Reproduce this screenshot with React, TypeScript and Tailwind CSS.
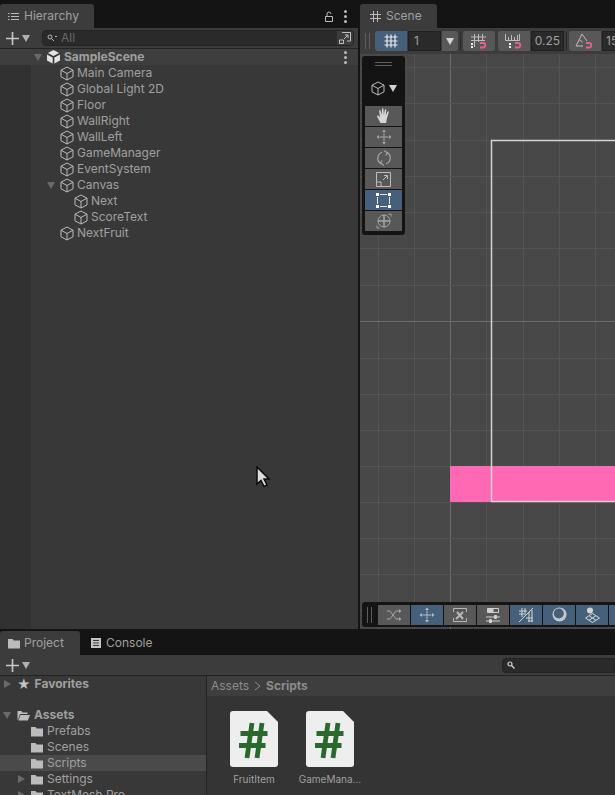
import React from "react";

const Cube = ({ className = "" }: { className?: string }) => (
  <svg width="14" height="15" viewBox="0 0 14 15" fill="none" stroke="#bcbcbc" strokeWidth="1" className={className}>
    <path d="M7 1 13 4.200V10.800L7 14 1 10.800V4.200Z" />
    <path d="M1 4.200 7 7.500 13 4.200M7 7.500V14" />
  </svg>
);

const Down = ({ color = "#6a6a6a", w = 8, h = 7 }: { color?: string; w?: number; h?: number }) => (
  <svg width={w} height={h} viewBox="0 0 8 7">
    <path d="M0 0H8L4 7Z" fill={color} />
  </svg>
);

const Right = () => (
  <svg width="7" height="8" viewBox="0 0 7 8">
    <path d="M0 0V8L7 4Z" fill="#6a6a6a" />
  </svg>
);

const Plus = () => (
  <svg width="13" height="13" viewBox="0 0 13 13">
    <path d="M5.700 0h1.600v13H5.700zM0 5.700h13v1.600H0z" fill="#c8c8c8" />
  </svg>
);

const Dots = () => (
  <div className="flex flex-col gap-[2px]">
    <span className="size-[3px] rounded-full bg-[#bcbcbc]" />
    <span className="size-[3px] rounded-full bg-[#bcbcbc]" />
    <span className="size-[3px] rounded-full bg-[#bcbcbc]" />
  </div>
);

const FolderIcon = ({ open }: { open?: boolean }) => (
  <svg width="13" height="11" viewBox="0 0 13 11">
    {open ? (
      <path d="M.5 1h4l1 1.500h5V4H3L.9 10H.5zM3.500 5H13l-2.200 5.500H1.400z" fill="#bcbcbc" />
    ) : (
      <path d="M0 1h4.500l1.200 1.500H12V10.500H0z" fill="#bcbcbc" />
    )}
  </svg>
);

const ScriptFile = () => (
  <svg width="48" height="57" viewBox="0 0 48 57">
    <path d="M3 0H37L48 11V53a3 3 0 0 1-3 3H3a3 3 0 0 1-3-3V3a3 3 0 0 1 3-3Z" fill="#eeeeee" />
    <g stroke="#2a682c" strokeWidth="4.800" fill="none">
      <path d="M22 12 17 47M32 12 27 47" />
      <path d="M10.500 22.500H37.500M9 34.500H35.500" />
    </g>
  </svg>
);

const MagnetTail = () => (
  <path d="M11 14.500h3a2.200 2.200 0 0 0 0-4.500H11" fill="none" stroke="#e8608f" strokeWidth="1.800" />
);

const GridIcon = () => (
  <svg width="14" height="14" viewBox="0 0 14 14" stroke="#eaeaea" strokeWidth="1.200" fill="none">
    <path d="M3 .5V13.500M7 .5V13.500M11 .5V13.500M.5 3H13.500M.5 7H13.500M.5 11H13.500" />
  </svg>
);

const SnapGrid = () => (
  <svg width="20" height="16" viewBox="0 0 20 16" stroke="#bdbdbd" fill="none">
    <path d="M5.500 1V14M9.500 1V9M13.500 1V8M2 4H17M2 7.500H16" />
    <path d="M2 11H4M2 14H4" stroke="#f0f0f0" strokeWidth="2" />
    <MagnetTail />
  </svg>
);

const SnapRule = () => (
  <svg width="20" height="16" viewBox="0 0 20 16" stroke="#bdbdbd" fill="none">
    <path d="M1.500 1V7.500H15.500V1M4.500 4V7M7.500 2V7M10.500 4V7M13.500 2V7" />
    <path d="M5 11H7M5 14H7" stroke="#f0f0f0" strokeWidth="2" />
    <MagnetTail />
  </svg>
);

const SnapAngle = () => (
  <svg width="20" height="16" viewBox="0 0 20 16" stroke="#bdbdbd" fill="none">
    <path d="M7 1 1 13H8M7 1 12 8M4.500 7 7.500 9" />
    <MagnetTail />
  </svg>
);

const Hand = () => (
  <svg width="16" height="16" viewBox="0 0 16 16" fill="#d6d6d6">
    <path d="M4.500 15 1.200 8.800c-.6-1.200.8-1.800 1.500-.8L4 9.500 3.200 3c-.1-1.200 1.300-1.300 1.500-.2L5.800 7l.2-5.700c0-1.300 1.500-1.300 1.500 0L7.800 7l1-5c.3-1.200 1.700-1 1.500.2L9.700 7.500l1.700-3.800c.5-1 1.800-.5 1.400.6L11 10l-.9 5Z" />
  </svg>
);

const MoveIcon = ({ c = "#a6a6a6" }: { c?: string }) => (
  <svg width="16" height="16" viewBox="0 0 16 16" fill={c} stroke={c}>
    <path d="M3.500 8H12.500M8 3.500V12.500" strokeWidth="1" />
    <path d="M8 .5 10 3H6ZM8 15.500 6 13H10ZM.5 8 3 6V10ZM15.500 8 13 10V6Z" stroke="none" />
  </svg>
);

const RotateIcon = () => (
  <svg width="16" height="16" viewBox="0 0 16 16" fill="none" stroke="#a6a6a6" strokeWidth="1.200">
    <path d="M6 2.200A6.300 6.300 0 0 0 4.500 13.300M10 13.800A6.300 6.300 0 0 0 11.500 2.700" />
    <path d="M8 .8 11.500 2.700 9.800 5.500M8 15.200 4.500 13.300 6.200 10.500" />
  </svg>
);

const ScaleIcon = () => (
  <svg width="15" height="15" viewBox="0 0 15 15" fill="none" stroke="#bdbdbd">
    <path d="M.5 10V.5H14.500V14.500H5M5 10H.5V14.500H5ZM7 8 11 4M8 3.500H11.500V7" />
  </svg>
);

const RectIcon = () => (
  <svg width="15" height="15" viewBox="0 0 15 15" fill="#ffffff" stroke="#e6e6e6">
    <path d="M1.500 4V11M13.500 4V11M4 1.500H11M4 13.500H11" fill="none" />
    <path d="M0 0h3v3H0zM12 0h3v3h-3zM0 12h3v3H0zM12 12h3v3h-3z" stroke="none" />
  </svg>
);

const TransformIcon = () => (
  <svg width="16" height="16" viewBox="0 0 16 16" fill="none" stroke="#a6a6a6">
    <circle cx="8" cy="8" r="6" />
    <path d="M8 2V14M2 8H14" strokeWidth="1.500" />
    <path d="M1 15V12.500M1 15H3.500M15 1V3.500M15 1H12.500" />
  </svg>
);

const tools = [
  { icon: <Hand />, active: false },
  { icon: <MoveIcon />, active: false },
  { icon: <RotateIcon />, active: false },
  { icon: <ScaleIcon />, active: false },
  { icon: <RectIcon />, active: true },
  { icon: <TransformIcon />, active: false },
];

const overlayButtons = [
  {
    active: false,
    icon: (
      <svg width="16" height="14" viewBox="0 0 16 14" fill="none" stroke="#a6a6a6">
        <path d="M1 3H4L10 11H13M1 11H4L10 3H13" />
        <path d="M13 1 15.500 3 13 5ZM13 9 15.500 11 13 13Z" fill="#a6a6a6" stroke="none" />
      </svg>
    ),
  },
  { active: true, icon: <MoveIcon c="#b4bcc4" /> },
  {
    active: false,
    icon: (
      <svg width="16" height="16" viewBox="0 0 16 16" fill="none" stroke="#b8b8b8">
        <path d="M1.500 5V1.500H14.500V5M1.500 11V14.500H14.500V11" />
        <path d="M4 12 11 5M5 5 11 12" strokeWidth="2" />
      </svg>
    ),
  },
  {
    active: false,
    icon: (
      <svg width="14" height="16" viewBox="0 0 14 16" fill="none" stroke="#d0d0d0">
        <path d="M1.500 1.500H12.500V5.500H1.500Z" />
        <path d="M2 1.500H7V5.500H2Z" fill="#d0d0d0" />
        <path d="M0 10H14M0 14H14" />
        <path d="M8.500 8.500H10.500V11.500H8.500ZM3.500 12.500H5.500V15.500H3.500Z" fill="#d0d0d0" />
      </svg>
    ),
  },
  {
    active: true,
    icon: (
      <svg width="16" height="16" viewBox="0 0 16 16" fill="none" stroke="#d4d4d4">
        <path d="M4 1V10M7 1V8M11 5V15M14 3V15M1 4H9M1 7H6M8 11H15M10 14H15M15 1 1 15" />
      </svg>
    ),
  },
  {
    active: true,
    icon: (
      <svg width="15" height="15" viewBox="0 0 15 15">
        <circle cx="7.500" cy="7.500" r="7" fill="#c8c8c8" />
        <circle cx="6.800" cy="6.500" r="5" fill="#46607c" />
      </svg>
    ),
  },
  {
    active: true,
    icon: (
      <svg width="15" height="16" viewBox="0 0 15 16" fill="none" stroke="#d4d4d4">
        <circle cx="5" cy="3.500" r="3" fill="#d4d4d4" stroke="none" />
        <path d="M7.500 6.500 14.500 11 7.500 15.500 .5 11Z M4 8.700 11 13.300M11 8.700 4 13.300" />
      </svg>
    ),
  },
];

const items = [
  { name: "Main Camera", pad: "pl-[29px]" },
  { name: "Global Light 2D", pad: "pl-[29px]" },
  { name: "Floor", pad: "pl-[29px]" },
  { name: "WallRight", pad: "pl-[29px]" },
  { name: "WallLeft", pad: "pl-[29px]" },
  { name: "GameManager", pad: "pl-[29px]" },
  { name: "EventSystem", pad: "pl-[29px]" },
  { name: "Canvas", pad: "pl-[29px]", open: true },
  { name: "Next", pad: "pl-[43px]" },
  { name: "ScoreText", pad: "pl-[43px]" },
  { name: "NextFruit", pad: "pl-[29px]" },
];

const SceneCanvas = () => {
  const xs = [378, 414, 450, 486, 523, 559, 595];
  const ys = [67, 103, 140, 176, 212, 248, 285, 321, 358, 394, 430, 466, 502, 538, 574, 610];
  return (
    <svg width="255" height="575" viewBox="360 54 255 575" className="absolute inset-0">
      {xs.map((x) => (
        <line key={x} x1={x + 0.5} x2={x + 0.5} y1="54" y2="629" stroke={x === 450 ? "#6c6c6c" : "#535353"} />
      ))}
      {ys.map((y) => (
        <line key={y} y1={y + 0.5} y2={y + 0.5} x1="360" x2="615" stroke={y === 321 ? "#6c6c6c" : "#535353"} />
      ))}
      <rect x="450" y="466" width="165" height="36" fill="#ff69b4" />
      <path d="M615 140.500H491.500V501.500H615" fill="none" stroke="#d4d4d4" strokeWidth="1.500" />
    </svg>
  );
};

export default function App() {
  return (
    <div className="flex h-[795px] w-[615px] flex-col overflow-hidden bg-[#141414] font-['Inter',sans-serif] text-[12px] text-[#a0a0a0]">
      <div className="flex h-[629px] shrink-0 gap-[2px]">
        {/* Hierarchy */}
        <section className="flex w-[358px] shrink-0 flex-col">
          <div className="flex h-[28px] shrink-0 items-end justify-between pr-[11px]">
            <div className="flex h-[24px] w-[94px] items-center gap-[5px] rounded-t-[3px] bg-[#3c3c3c] pl-[8px]">
              <svg width="11" height="9" viewBox="0 0 11 9" stroke="#bcbcbc">
                <path d="M3 1.500H11M3 4.500H11M3 7.500H11M0 1.500H1.500M0 4.500H1.500M0 7.500H1.500" />
              </svg>
              <span>Hierarchy</span>
            </div>
            <div className="mb-[5px] flex items-center gap-[11px]">
              <svg width="8" height="11" viewBox="0 0 8 11" fill="none" stroke="#bcbcbc">
                <path d="M.5 5.500H7.500V10.500H.5ZM2 5.500V3a2 2 0 0 1 4 0" />
              </svg>
              <Dots />
            </div>
          </div>
          <div className="flex h-[20px] shrink-0 items-center bg-[#3c3c3c] pl-[6px] pr-[4px]">
            <Plus />
            <span className="ml-[3px] mr-[12px]">
              <Down color="#b0b0b0" />
            </span>
            <div className="flex h-[16px] flex-1 items-center gap-[4px] rounded-[4px] border border-[#232323] bg-[#2a2a2a] pl-[4px]">
              <svg width="10" height="8" viewBox="0 0 10 8" fill="none" stroke="#b4b4b4">
                <circle cx="3" cy="3" r="2" />
                <path d="M4.500 4.500 7 7M8 2.500H10" />
              </svg>
              <span className="text-[#686868]">All</span>
              <div className="ml-auto flex h-[14px] w-[16px] items-center justify-center rounded-r-[3px] bg-[#3c3c3c]">
                <svg width="12" height="12" viewBox="0 0 12 12" fill="none" stroke="#c0c0c0">
                  <path d="M3 .5H11.500V9H8M.5 8H4.500V11.500H.5ZM5 7 9 3M6 3H9V6" />
                </svg>
              </div>
            </div>
          </div>
          <div className="h-px shrink-0 bg-[#232323]" />
          <div className="flex h-[16px] shrink-0 items-center bg-[#3e3e3e] pl-[34px] pr-[11px] font-bold">
            <Down />
            <svg width="13" height="14" viewBox="0 0 13 14" className="ml-[5px] mr-[4px]">
              <path d="M6.500 0 13 3.500V10.500L6.500 14 0 10.500V3.500Z" fill="#e2e2e2" />
              <path d="M6.500 7V14M6.500 7 0 3.500M6.500 7 13 3.500" stroke="#333333" strokeWidth="1.600" />
            </svg>
            <span className="flex-1">SampleScene</span>
            <Dots />
          </div>
          <div className="flex min-h-0 flex-1">
            <div className="w-[31px] shrink-0 bg-[#313131]" />
            <div className="flex-1 bg-[#383838]">
              {items.map((item) => (
                <div key={item.name} className={`relative flex h-[16px] items-center gap-[3px] ${item.pad}`}>
                  {item.open && (
                    <span className="absolute left-[16px] top-[5px]">
                      <Down />
                    </span>
                  )}
                  <Cube />
                  <span>{item.name}</span>
                </div>
              ))}
            </div>
          </div>
        </section>

        {/* Scene */}
        <section className="flex min-w-0 flex-1 flex-col">
          <div className="flex h-[28px] shrink-0 items-end">
            <div className="flex h-[24px] w-[77px] items-center gap-[5px] rounded-t-[3px] bg-[#3c3c3c] pl-[10px]">
              <svg width="11" height="11" viewBox="0 0 11 11" stroke="#bcbcbc">
                <path d="M3.500 0V11M7.500 0V11M0 3.500H11M0 7.500H11" />
              </svg>
              <span>Scene</span>
            </div>
          </div>
          <div className="flex h-[26px] shrink-0 items-center overflow-hidden bg-[#3c3c3c] pl-[5px]">
            <div className="mr-[5px] h-[16px] w-[5px] shrink-0 border-x border-[#5e5e5e]" />
            <div className="flex h-[20px] w-[32px] shrink-0 items-center justify-center rounded-l-[3px] bg-[#46607c]">
              <GridIcon />
            </div>
            <div className="ml-px flex h-[20px] w-[33px] shrink-0 items-center border border-[#202020] bg-[#2a2a2a] pl-[5px] text-[#a0a0a0]">1</div>
            <div className="ml-px flex h-[20px] w-[16px] shrink-0 items-center justify-center rounded-r-[3px] bg-[#585858]">
              <Down color="#d4d4d4" />
            </div>
            <div className="mx-[2px] h-[18px] w-px shrink-0 bg-[#2c2c2c]" />
            <div className="flex h-[20px] w-[32px] shrink-0 items-center justify-center rounded-[3px] bg-[#585858]">
              <SnapGrid />
            </div>
            <div className="ml-[3px] flex h-[20px] w-[32px] shrink-0 items-center justify-center rounded-l-[3px] bg-[#585858]">
              <SnapRule />
            </div>
            <div className="ml-px flex h-[20px] w-[33px] shrink-0 items-center justify-center border border-[#202020] bg-[#2a2a2a] text-[#a0a0a0]">0.25</div>
            <div className="mx-[2px] h-[18px] w-px shrink-0 bg-[#2c2c2c]" />
            <div className="flex h-[20px] w-[32px] shrink-0 items-center justify-center rounded-l-[3px] bg-[#585858]">
              <SnapAngle />
            </div>
            <div className="ml-px flex h-[20px] w-[33px] shrink-0 items-center border border-[#202020] bg-[#2a2a2a] pl-[3px] text-[#a0a0a0]">15</div>
          </div>
          <div className="relative min-h-0 flex-1 bg-[#484848]">
            <SceneCanvas />
            {/* tool overlay */}
            <div className="absolute left-[2px] top-[2px] flex w-[43px] flex-col items-center rounded-[3px] bg-[#141414] pb-[4px]">
              <div className="mt-[6px] h-[4px] w-[17px] border-y border-[#5e5e5e]" />
              <div className="mb-[7px] mt-[11px] flex h-[22px] items-center gap-[4px]">
                <Cube />
                <Down color="#d4d4d4" />
              </div>
              <div className="flex flex-col gap-px">
                {tools.map((t, i) => (
                  <div key={i} className={`flex h-[20px] w-[37px] items-center justify-center ${t.active ? "bg-[#46607c]" : "bg-[#585858]"}`}>
                    {t.icon}
                  </div>
                ))}
              </div>
            </div>
            {/* bottom overlay */}
            <div className="absolute bottom-[2px] left-[2px] flex h-[25px] w-[260px] items-center rounded-l-[3px] bg-[#141414] pl-[5px]">
              <div className="mr-[6px] h-[16px] w-[5px] shrink-0 border-x border-[#5e5e5e]" />
              <div className="flex gap-px">
                {overlayButtons.map((b, i) => (
                  <div key={i} className={`flex h-[20px] w-[32px] shrink-0 items-center justify-center ${b.active ? "bg-[#46607c]" : "bg-[#585858]"}`}>
                    {b.icon}
                  </div>
                ))}
                <div className="h-[20px] w-[32px] shrink-0 bg-[#46607c]" />
              </div>
            </div>
          </div>
        </section>
      </div>

      {/* Project */}
      <section className="flex min-h-0 flex-1 flex-col">
        <div className="flex h-[26px] shrink-0 items-end pt-[2px]">
          <div className="flex h-[24px] w-[80px] items-center gap-[3px] rounded-t-[3px] bg-[#3c3c3c] pl-[8px]">
            <FolderIcon />
            <span>Project</span>
          </div>
          <div className="flex h-[24px] items-center gap-[5px] pl-[11px]">
            <svg width="10" height="10" viewBox="0 0 10 10" fill="#c4c4c4">
              <path d="M0 0H10V10H0Z" />
              <path d="M2 2.500H8M2 5H8M2 7.500H8" stroke="#3a3a3a" />
            </svg>
            <span>Console</span>
          </div>
        </div>
        <div className="flex h-[20px] shrink-0 items-center bg-[#3c3c3c] pl-[6px]">
          <Plus />
          <span className="ml-[3px]">
            <Down color="#b0b0b0" />
          </span>
          <div className="ml-auto flex h-[15px] w-[113px] items-center rounded-l-[4px] border border-[#232323] bg-[#2a2a2a] pl-[4px]">
            <svg width="8" height="8" viewBox="0 0 8 8" fill="none" stroke="#d4d4d4" strokeWidth="1.200">
              <circle cx="3" cy="3" r="2" />
              <path d="M4.500 4.500 7.500 7.500" />
            </svg>
          </div>
        </div>
        <div className="h-px shrink-0 bg-[#232323]" />
        <div className="flex min-h-0 flex-1">
          <div className="w-[206px] shrink-0 overflow-hidden bg-[#383838]">
            <div className="flex h-[16px] items-center pl-[4px] font-bold">
              <Right />
              <span className="ml-[6px] mr-[4px] text-[13px] leading-none text-[#c4c4c4]">★</span>
              <span>Favorites</span>
            </div>
            <div className="h-[15px]" />
            <div className="flex h-[16px] items-center pl-[3px] font-bold">
              <Down />
              <span className="ml-[6px] mr-[4px]">
                <FolderIcon open />
              </span>
              <span>Assets</span>
            </div>
            {["Prefabs", "Scenes", "Scripts", "Settings", "TextMesh Pro"].map((name) => (
              <div key={name} className={`relative flex h-[16px] items-center gap-[3px] pl-[31px] ${name === "Scripts" ? "bg-[#4a4a4a]" : ""}`}>
                {(name === "Settings" || name === "TextMesh Pro") && (
                  <span className="absolute left-[18px] top-[4px]">
                    <Right />
                  </span>
                )}
                <FolderIcon />
                <span>{name}</span>
              </div>
            ))}
          </div>
          <div className="w-px shrink-0 bg-[#232323]" />
          <div className="flex min-w-0 flex-1 flex-col bg-[#343434]">
            <div className="flex h-[20px] shrink-0 items-center gap-[5px] bg-[#3e3e3e] pl-[4px] text-[#8c8c8c]">
              <span>Assets</span>
              <svg width="7" height="10" viewBox="0 0 7 10" fill="none" stroke="#8c8c8c">
                <path d="M1 1 6 5 1 9" />
              </svg>
              <span className="font-bold">Scripts</span>
            </div>
            <div className="flex gap-[28px] pl-[23px] pt-[15px]">
              {["FruitItem", "GameMana..."].map((name) => (
                <div key={name} className="flex w-[48px] flex-col items-center gap-[4px]">
                  <ScriptFile />
                  <span className="whitespace-nowrap text-[10px] leading-[14px] text-[#a0a0a0]">{name}</span>
                </div>
              ))}
            </div>
          </div>
        </div>
      </section>

      {/* mouse pointer over the hierarchy */}
      <svg width="16" height="22" viewBox="0 0 16 22" className="absolute left-[255px] top-[466px]">
        <path d="M2 1 14 13H9L12 19 9 20.500 6 14.500 2 18Z" fill="#dcdcdc" stroke="#0c0c0c" strokeWidth="1.500" />
      </svg>
    </div>
  );
}
